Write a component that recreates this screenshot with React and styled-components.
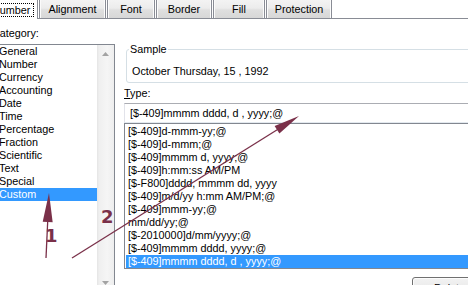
import React from "react";
import styled, { createGlobalStyle, css } from "styled-components";

const GlobalStyle = createGlobalStyle`
  html, body { margin: 0; padding: 0; background: #fff; }
  #root { position: relative; width: 468px; height: 285px; overflow: hidden; background: #fff; }
`;

const Page = styled.div`
  width: 520px;
  margin-left: -12px;
  font-family: "Liberation Sans", Arial, sans-serif;
  font-size: 10.8px;
  line-height: 13px;
  color: #000;
`;

const TabStrip = styled.div`
  display: flex;
  align-items: flex-start;
  gap: 1px;
  height: 18px;
  padding-left: 1px;
  border-bottom: 1px solid #898c95;
`;

const Tab = styled.div`
  position: relative;
  box-sizing: border-box;
  width: ${(p) => p.$w}px;
  height: 18px;
  display: flex;
  align-items: center;
  justify-content: center;
  border: 1px solid #898c95;
  border-top: none;
  border-bottom: none;
  background: linear-gradient(#f3f3f3 0%, #ececec 45%, #dfdfdf 55%, #d7d7d7 100%);
  box-shadow: inset 1px 0 #fbfbfb, inset -1px 0 #fbfbfb;
  ${(p) =>
    p.$active &&
    css`
      z-index: 1;
      height: 19px;
      justify-content: flex-start;
      background: #fff;
      box-shadow: none;
    `}
`;

const Focus = styled.span`
  box-sizing: border-box;
  height: 14px;
  line-height: 12px;
  padding: 0 3px 0 1px;
  border: 1px dotted #000;
`;

const Body = styled.div`
  display: flex;
  padding-top: 8px;
`;

const LeftCol = styled.div`
  width: 123px;
  padding-left: 4px;
  display: flex;
  flex-direction: column;
`;

const Label = styled.div`
  height: 13px;
  margin-top: ${(p) => p.$mt || 0}px;
`;

const CategoryBox = styled.div`
  display: flex;
  box-sizing: border-box;
  width: 120px;
  height: 248px;
  margin: 4px 0 0 3px;
  border: 1px solid #828790;
`;

const CategoryItems = styled.div`
  flex: 1;
  display: flex;
  flex-direction: column;
`;

const Item = styled.div`
  height: 13px;
  padding-left: ${(p) => p.$pad}px;
  white-space: nowrap;
  ${(p) =>
    p.$selected &&
    css`
      background: #3399ff;
      color: #fff;
    `}
`;

const ScrollBar = styled.div`
  width: 17px;
  display: flex;
  flex-direction: column;
  justify-content: space-between;
  background: linear-gradient(to right, #e4e4e4 0, #efefef 2px, #f5f5f5 60%, #eeeeee 100%);
`;

const ScrollArrow = styled.div`
  height: 17px;
  display: flex;
  align-items: center;
  justify-content: center;
`;

const RightCol = styled.div`
  width: 363px;
  margin-left: 9px;
  display: flex;
  flex-direction: column;
`;

const Group = styled.fieldset`
  margin: 16px 0 0 2px;
  padding: 9px 0 4px 5px;
  min-inline-size: 0;
  border: 1px solid #d5dfe5;
  border-radius: 3px;
`;

const Legend = styled.legend`
  margin-left: -3px;
  padding: 0 1px;
  height: 13px;
  line-height: 13px;
`;

const TypeInput = styled.div`
  box-sizing: border-box;
  height: 20px;
  margin-top: 3px;
  padding-left: 5px;
  display: flex;
  align-items: center;
  border: 1px solid #e2e3ea;
  border-top-color: #abadb3;
  border-bottom-color: #e3e9ef;
  white-space: nowrap;
`;

const FormatList = styled.div`
  display: flex;
  flex-direction: column;
  padding: 1px 0 0 1px;
  border: 1px solid #828790;
`;

const ButtonRow = styled.div`
  display: flex;
  justify-content: flex-end;
  margin-top: 8px;
`;

const Button = styled.button`
  box-sizing: border-box;
  width: 75px;
  height: 23px;
  padding: 0;
  font: inherit;
  color: #000;
  border: 1px solid #707070;
  border-radius: 3px;
  background: linear-gradient(#f2f2f2 0%, #ebebeb 50%, #dddddd 51%, #cfcfcf 100%);
  box-shadow: inset 0 0 0 1px #fcfcfc;
`;

const Overlay = styled.svg`
  position: absolute;
  left: 0;
  top: 0;
  pointer-events: none;
`;

const Marker = styled.span`
  position: absolute;
  left: ${(p) => p.$x}px;
  top: ${(p) => p.$y}px;
  font-family: "DejaVu Sans", sans-serif;
  font-weight: bold;
  font-size: 18px;
  line-height: 18px;
  color: #7a3049;
`;

const tabs = [
  { label: "Number", w: 49, active: true },
  { label: "Alignment", w: 67 },
  { label: "Font", w: 48 },
  { label: "Border", w: 56 },
  { label: "Fill", w: 52 },
  { label: "Protection", w: 66 },
];

const categories = [
  "General",
  "Number",
  "Currency",
  "Accounting",
  "Date",
  "Time",
  "Percentage",
  "Fraction",
  "Scientific",
  "Text",
  "Special",
  "Custom",
];

const formats = [
  "[$-409]d-mmm-yy;@",
  "[$-409]d-mmm;@",
  "[$-409]mmmm d, yyyy;@",
  "[$-409]h:mm:ss AM/PM",
  "[$-F800]dddd, mmmm dd, yyyy",
  "[$-409]m/d/yy h:mm AM/PM;@",
  "[$-409]mmm-yy;@",
  "mm/dd/yy;@",
  "[$-2010000]d/mm/yyyy;@",
  "[$-409]mmmm dddd, yyyy;@",
  "[$-409]mmmm dddd, d , yyyy;@",
];

const Tri = ({ up }) => (
  <svg width="7" height="4" viewBox="0 0 7 4">
    <polygon points={up ? "0,4 7,4 3.5,0" : "0,0 7,0 3.5,4"} fill="#a3a3a3" />
  </svg>
);

export default function App() {
  return (
    <>
      <GlobalStyle />
      <Page>
        <TabStrip>
          {tabs.map((t) => (
            <Tab key={t.label} $w={t.w} $active={t.active}>
              {t.active ? <Focus>{t.label}</Focus> : t.label}
            </Tab>
          ))}
        </TabStrip>
        <Body>
          <LeftCol>
            <Label>
              <u>C</u>ategory:
            </Label>
            <CategoryBox>
              <CategoryItems>
                {categories.map((c) => (
                  <Item key={c} $pad={3} $selected={c === "Custom"}>
                    {c}
                  </Item>
                ))}
              </CategoryItems>
              <ScrollBar>
                <ScrollArrow>
                  <Tri up />
                </ScrollArrow>
                <ScrollArrow>
                  <Tri />
                </ScrollArrow>
              </ScrollBar>
            </CategoryBox>
          </LeftCol>
          <RightCol>
            <Group>
              <Legend>Sample</Legend>
              October Thursday, 15 , 1992
            </Group>
            <Label $mt={4}>
              <u>T</u>ype:
            </Label>
            <TypeInput>[$-409]mmmm dddd, d , yyyy;@</TypeInput>
            <FormatList>
              {formats.map((f, i) => (
                <Item key={f} $pad={2} $selected={i === formats.length - 1}>
                  {f}
                </Item>
              ))}
            </FormatList>
            <ButtonRow>
              <Button>Delete</Button>
            </ButtonRow>
          </RightCol>
        </Body>
      </Page>
      <Overlay width="468" height="285" viewBox="0 0 468 285">
        <line x1="46" y1="258" x2="48" y2="215" stroke="#7a3049" strokeWidth="1.3" />
        <polygon points="49,193 52.7,222.2 42.7,221.8" fill="#7a3049" />
        <line x1="72" y1="258" x2="280" y2="128" stroke="#7a3049" strokeWidth="1.3" />
        <polygon points="299,116 279.4,133.6 274.6,126" fill="#7a3049" />
      </Overlay>
      <Marker $x={45} $y={227}>1</Marker>
      <Marker $x={101} $y={208}>2</Marker>
    </>
  );
}
